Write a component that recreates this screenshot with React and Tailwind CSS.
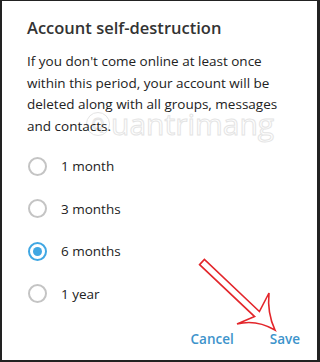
import { useState } from 'react';

const options = ['1 month', '3 months', '6 months', '1 year'];

function Radio({ checked }) {
  return (
    <span
      className={
        'flex h-[19px] w-[19px] shrink-0 items-center justify-center rounded-full border-2 ' +
        (checked ? 'border-[#40a7e3]' : 'border-[#c4c4c4]')
      }
    >
      {checked && <span className="h-[9px] w-[9px] rounded-full bg-[#40a7e3]" />}
    </span>
  );
}

export default function App() {
  const [value, setValue] = useState('6 months');

  return (
    <div
      className="relative h-[362px] w-[320px] overflow-hidden border-t border-b-2 border-l-2 border-r-[3px] border-[#222] bg-white text-[#222]"
      style={{ fontFamily: '"Open Sans", "Noto Sans", sans-serif' }}
    >
      {/* watermark */}
      <div className="pointer-events-none absolute left-[84px] top-[108px] flex items-center text-[30px] leading-none text-transparent [-webkit-text-stroke:1px_#e4e4e4]">
        <span className="flex h-[24px] w-[24px] items-center justify-center rounded-full border-[1.5px] border-[#e4e4e4] text-[16px]">Q</span>
        <span className="ml-[1px]">uantrimang</span>
      </div>

      <div className="relative px-[25px] pt-[14px]">
        <h2 className="text-[16.5px] font-semibold leading-[26px] text-[#333]">Account self-destruction</h2>
        <p className="mt-[10px] text-[13.5px] leading-[21.5px] text-[#222]">
          If you don't come online at least once within this period, your account will be deleted along with all groups, messages and contacts.
        </p>
      </div>

      <div className="relative mt-[8px] flex flex-col">
        {options.map((o) => (
          <button
            key={o}
            onClick={() => setValue(o)}
            className="flex h-[42.5px] items-center gap-[14px] pl-[26px] text-left text-[13.5px] text-[#222]"
          >
            <Radio checked={value === o} />
            <span>{o}</span>
          </button>
        ))}
      </div>

      <div className="relative mt-[14px] flex justify-end gap-[36px] pr-[17px] text-[13.5px] font-semibold text-[#3d93cb]">
        <button>Cancel</button>
        <button>Save</button>
      </div>

      <svg className="pointer-events-none absolute left-0 top-0" width="320" height="362" viewBox="0 0 320 362">
        <path
          d="M197.6,263.6 L202.4,258.5 L257.4,310.5 L267,292 Q265,312 273,329 Q254,318 235,323 L252.6,315.6 Z"
          fill="white"
          stroke="#e3262b"
          strokeWidth="1.6"
          strokeLinejoin="miter"
        />
      </svg>
    </div>
  );
}
